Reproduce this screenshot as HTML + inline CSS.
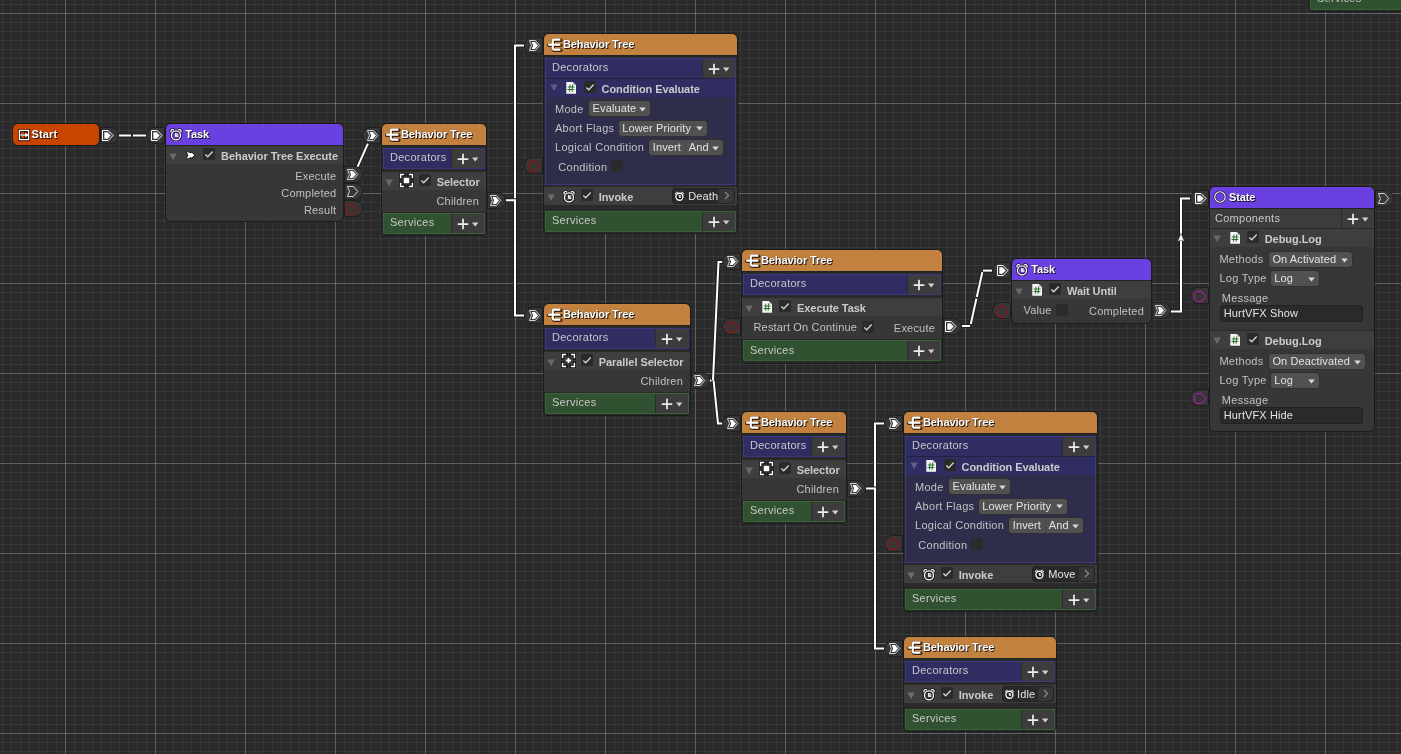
<!DOCTYPE html>
<html lang="en"><head><meta charset="utf-8"><title>Behavior Tree Graph</title>
<style>
html,body{margin:0;padding:0;background:#2a2a2a;}
body{width:1401px;height:754px;overflow:hidden;position:relative;font-family:"Liberation Sans",sans-serif;font-size:11px;color:#c4c4c4;}
#cv{position:absolute;left:0;top:0;width:1401px;height:754px;overflow:hidden;background-color:#2a2a2a;}
#cv{background-image:
 repeating-linear-gradient(90deg,transparent 0,transparent 65px,rgba(255,255,255,.2) 65px,rgba(255,255,255,.2) 66px,transparent 66px,transparent 90px),
 repeating-linear-gradient(180deg,transparent 0,transparent 13px,rgba(255,255,255,.2) 13px,rgba(255,255,255,.2) 14px,transparent 14px,transparent 90px),
 repeating-linear-gradient(90deg,transparent 0,transparent 2px,rgba(255,255,255,.055) 2px,rgba(255,255,255,.055) 3px,transparent 3px,transparent 9px),
 repeating-linear-gradient(180deg,transparent 0,transparent 4px,rgba(255,255,255,.055) 4px,rgba(255,255,255,.055) 5px,transparent 5px,transparent 9px);
 background-size:auto;background-repeat:repeat;}
#cv div,#cv svg.ic{position:absolute;box-sizing:content-box;}
.node{border:1px solid #1c1c1c;border-radius:6px;background:rgba(42,42,42,.97);overflow:hidden;}
.body{background:rgba(57,57,57,.9);}
.start{border-radius:6px;}
.hdr{border-bottom:1px solid #232323;}
.t{white-space:nowrap;line-height:18px;height:18px;}
.ht{letter-spacing:-.12px;font-weight:bold;color:#fff;line-height:21px;height:21px;font-size:11px;text-shadow:1px 1px 0 rgba(0,0,0,.8),0 0 1px rgba(0,0,0,.6);}
.b{font-weight:bold;color:#cbcbcb;}
.rt{line-height:20.5px;letter-spacing:-.05px;}
.rt2{line-height:20px;letter-spacing:-.08px;}
.row{background:rgba(64,64,64,.94);}
.drow{background:#2f2d62;border-top:1px solid #232142;}
.bar{box-sizing:content-box;}
.bl{line-height:16.5px;height:20px;color:#c8c8c8;letter-spacing:.28px;}
.plus{background:#3c3c3c;border-left:1px solid #2c2c2c;}
.pl{line-height:18px;color:#c0c0c0;letter-spacing:.2px;}
.fl{line-height:18px;color:#c2c2c2;letter-spacing:.28px;}
.dd{background:#515151;border-radius:3px;box-shadow:0 0 0 1px #303030;}
.dt{line-height:14.6px;height:15px;color:#e4e4e4;letter-spacing:.12px;}
.tf{background:#2a2a2a;border-radius:3px;box-shadow:0 0 0 1px #212121;}
.objf{background:#2a2a2a;border-radius:3px;box-shadow:0 0 0 1px #232323;overflow:hidden;}
.objb{background:#373737;}
.decp{background:rgba(47,46,78,.92);border:1px solid #3b397f;}
.cmpbar{background:#3c3c3c;border-bottom:1px solid #2a2a2a;}
.tab{background:#363636;border:1px solid #1f1f1f;}
.tr{border-radius:0 8.5px 8.5px 0;}
.tl{border-radius:8.5px 0 0 8.5px;}
.eo{fill:none;stroke:#1e1e1e;stroke-width:4;stroke-linecap:butt;stroke-linejoin:miter;}
.ei{fill:none;stroke:#fff;stroke-width:2;stroke-linecap:butt;stroke-linejoin:miter;}
#ed{position:absolute;left:0;top:0;}
#ly{left:0;top:0;width:1401px;height:754px;will-change:transform;}
</style></head>
<body>
<div id="cv">
<svg id="ed" width="1401" height="754" viewBox="0 0 1401 754"><path d="M119 135.5H131" class="eo"/><path d="M119 135.5H131" class="ei"/><path d="M133 135.5H146" class="eo"/><path d="M133 135.5H146" class="ei"/><path d="M357.2 167.6L368 143.4" class="eo"/><path d="M357.2 167.6L368 143.4" class="ei"/><path d="M506 200.3H515V45.5H524" class="eo"/><path d="M506 200.3H515V45.5H524" class="ei"/><path d="M506 200.3H515V315.5H524" class="eo"/><path d="M506 200.3H515V315.5H524" class="ei"/><path d="M708 380.5H714" class="eo"/><path d="M708 380.5H714" class="ei"/><path d="M713 380.5L718.5 262H723" class="eo"/><path d="M713 380.5L718.5 262H723" class="ei"/><path d="M713.6 380.5L718 423.5H723" class="eo"/><path d="M713.6 380.5L718 423.5H723" class="ei"/><path d="M962 326H970" class="eo"/><path d="M962 326H970" class="ei"/><path d="M970.8 324L976.4 298.6" class="eo"/><path d="M970.8 324L976.4 298.6" class="ei"/><path d="M976.8 297L982.4 272" class="eo"/><path d="M976.8 297L982.4 272" class="ei"/><path d="M983 270.6H992" class="eo"/><path d="M983 270.6H992" class="ei"/><path d="M1171 311.5H1181V198.5H1190" class="eo"/><path d="M1171 311.5H1181V198.5H1190" class="ei"/><path d="M866 488.4H875V423.5H884" class="eo"/><path d="M866 488.4H875V423.5H884" class="ei"/><path d="M866 488.4H875V648.5H884" class="eo"/><path d="M866 488.4H875V648.5H884" class="ei"/><path d="M1181 233.2L1184.4 241.6L1181 240.2L1177.6 241.6Z" fill="#fff" stroke="#222" stroke-width=".5"/></svg>
<div id="ly">
<div class="node start" style="left:12px;top:123px;width:86px;height:21px;background:#c84400;"><svg class="ic" style="left:4.5px;top:4.6px" width="13" height="13" viewBox="0 0 13 13" ><rect x="1.4" y="1.4" width="9.2" height="9.2" fill="none" stroke="#1a0a00" stroke-width="3" opacity=".85"/><path d="M2.6 6H8M7.2 3.2L11 6L7.2 8.8Z" stroke="#1a0a00" stroke-width="2.2" fill="#1a0a00" opacity=".8"/><rect x="1.4" y="1.4" width="9.2" height="9.2" fill="none" stroke="#fff" stroke-width="1.25"/><path d="M2.4 6H8" stroke="#e4eaee" stroke-width="1.3"/><path d="M7.2 3.4L10.8 6L7.2 8.6Z" fill="#fff"/></svg><div class="t ht" style="left:18.6px;top:0px;letter-spacing:0.1px;">Start</div></div>
<div class="tab tr" style="left:99.5px;top:127.3px;width:17px;height:14.5px;"><svg class="ic" style="left:0.8px;top:1px" width="13" height="13" viewBox="0 0 13 13" ><path d="M1.5 1.5H7.2L12 6.5L7.2 11.5H1.5Z" fill="none" stroke="#fff" stroke-width="1"/><path d="M3.3 3.3H6.6L9.7 6.5L6.6 9.7H3.3Z" fill="#fff"/></svg></div>
<div class="node " style="left:165px;top:123px;width:177px;height:97px;"><div class="hdr" style="left:0px;top:0px;width:177px;height:21px;background:#6a40e0;"><svg class="ic" style="left:3.3px;top:3.8px" width="14.0" height="13.0" viewBox="0 0 14 13"><g fill="none" stroke="#101010" stroke-width="3" opacity=".85"><circle cx="7" cy="7.4" r="4.5"/><path d="M2.3 4.4Q1.2 2.2 3.3 1.7Q4.4 1.5 5 2.2M11.7 4.4Q12.8 2.2 10.7 1.7Q9.6 1.5 9 2.2"/></g><circle cx="7" cy="7.4" r="4.5" fill="none" stroke="#fff" stroke-width="1.35"/><path d="M2.3 4.4Q1.2 2.2 3.3 1.7Q4.4 1.5 5 2.2M11.7 4.4Q12.8 2.2 10.7 1.7Q9.6 1.5 9 2.2" fill="none" stroke="#fff" stroke-width="1.25"/><path d="M6.4 5.2H9.2V8.4H6.4Z" fill="#d8d8d8" opacity=".75"/><path d="M6.7 5V8.2H9.4" fill="none" stroke="#fff" stroke-width="1.1"/></svg><div class="t ht" style="left:19.2px;top:0px;">Task</div></div><div class="row" style="left:0px;top:22px;width:177px;height:18px;"><svg class="ic" style="left:2.8px;top:6.5px" width="9" height="8" viewBox="0 0 9 8" ><path d="M.4 .5H7.8L4.1 7.1Z" fill="rgba(255,255,255,.23)"/></svg><svg class="ic" style="left:19px;top:4px" width="12" height="11" viewBox="0 0 12 11" ><path d="M1.4 2.4Q2.6 1.4 3.8 2L6 2.8L6.8 2.2L9.9 5.2L6.8 8.2L6 7.6L3.8 8.6Q2.6 9.2 1.4 8.2L2.8 5.3Z" fill="#fff" stroke="#111" stroke-width="1"/></svg><svg class="ic" style="left:37px;top:2px" width="12" height="12" viewBox="0 0 12 12" ><rect x="0" y="0" width="12" height="12" rx="1.5" fill="#2a2a2a"/><path d="M2.3 6.5L4.7 8.8L9.7 3.5" fill="none" stroke="#d2d2d2" stroke-width="1.35"/></svg><div class="t b rt" style="left:55px;top:0px;">Behavior Tree Execute</div></div><div class="body" style="left:0px;top:40px;width:177px;height:57px;"></div><div class="t pl" style="left:0px;top:43px;width:170.3px;text-align:right;">Execute</div><div class="t pl" style="left:0px;top:60px;width:170.3px;text-align:right;">Completed</div><div class="t pl" style="left:0px;top:77px;width:170.3px;text-align:right;">Result</div></div>
<div class="tab tl" style="left:146.1px;top:127.3px;width:17px;height:14.5px;"><svg class="ic" style="left:2.8px;top:1px" width="13" height="13" viewBox="0 0 13 13" ><path d="M1.5 1.5H7.2L12 6.5L7.2 11.5H1.5Z" fill="none" stroke="#fff" stroke-width="1"/><path d="M3.3 3.3H6.6L9.7 6.5L6.6 9.7H3.3Z" fill="#fff"/></svg></div>
<div class="tab tr" style="left:343.5px;top:166.3px;width:17px;height:14.5px;"><svg class="ic" style="left:1.2px;top:0.8px" width="14" height="13" viewBox="0 0 14 13" ><path d="M1.5 1.5H7.4L11.7 6.5L7.4 11.5H1.5L3.4 6.5Z" fill="none" stroke="#dcdcdc" stroke-width=".95"/><path d="M3.7 3H6.9L10 6.5L6.9 10H3.7L5.1 6.5Z" fill="#fff"/></svg></div>
<div class="tab tr" style="left:343.5px;top:183.3px;width:17px;height:14.5px;"><svg class="ic" style="left:1.2px;top:0.8px" width="14" height="13" viewBox="0 0 14 13" ><path d="M1.5 1.5H7.4L11.7 6.5L7.4 11.5H1.5L3.4 6.5Z" fill="none" stroke="#dcdcdc" stroke-width=".95"/></svg></div>
<div class="tab tr" style="left:343.5px;top:200.3px;width:17px;height:14.5px;"><svg class="ic" style="left:0.4px;top:1.5px" width="14" height="13" viewBox="0 0 14 13" ><path d="M1.3 4.2L3.9 1.4H8.6L12.9 6.5L8.6 11.6H3.9L1.3 8.8Z" fill="none" stroke="#b40202" stroke-width=".95"/></svg></div>
<div class="node " style="left:381px;top:123px;width:104px;height:111px;"><div class="hdr" style="left:0px;top:0px;width:104px;height:21px;background:#c2813f;"><svg class="ic" style="left:3px;top:4px" width="16" height="14" viewBox="0 0 16 14" ><path d="M1.2 6.6H5.8M13.4 1.6H6.9Q5.8 1.6 5.8 2.7V10.5Q5.8 11.6 6.9 11.6H13.4M5.8 6.6H13.4" fill="none" stroke="#1a0d00" stroke-width="3.4" stroke-linecap="round" opacity=".8" transform="translate(.5 .6)"/><path d="M1.2 6.6H5.8M13.4 1.6H6.9Q5.8 1.6 5.8 2.7V10.5Q5.8 11.6 6.9 11.6H13.4M5.8 6.6H13.4" fill="none" stroke="#fff" stroke-width="2.05" stroke-linecap="butt"/></svg><div class="t ht" style="left:19px;top:0px;">Behavior Tree</div></div><div class="bar" style="left:1px;top:24px;width:100px;height:19px;background:#2f2d62;border:1px solid #3b397f;"><div class="t bl" style="left:6px;top:0px;">Decorators</div><div class="plus" style="left:67px;top:0px;width:32px;height:19px;"><svg class="ic" style="left:4.5px;top:3.5px" width="22" height="12" viewBox="0 0 22 12" ><path d="M6 .7V11.3M.7 6H11.3" stroke="#ececec" stroke-width="1.75"/><path d="M15 4.4H21.4L18.2 8.4Z" fill="#d0d0d0"/></svg></div></div><div class="row" style="left:0px;top:48px;width:104px;height:18px;"><svg class="ic" style="left:2.8px;top:6.5px" width="9" height="8" viewBox="0 0 9 8" ><path d="M.4 .5H7.8L4.1 7.1Z" fill="rgba(255,255,255,.23)"/></svg><svg class="ic" style="left:17.3px;top:1px" width="15" height="15" viewBox="0 0 15 15" ><path d="M1.6 5.2V1.6H5.2M9.8 1.6H13.4V5.2M13.4 9.8V13.4H9.8M5.2 13.4H1.6V9.8" fill="none" stroke="#0c0c0c" stroke-width="3.2" stroke-linecap="square" opacity=".92"/><rect x="3.8" y="3.8" width="7.4" height="7.4" fill="#0c0c0c" opacity=".92"/><path d="M1.6 5.2V1.6H5.2M9.8 1.6H13.4V5.2M13.4 9.8V13.4H9.8M5.2 13.4H1.6V9.8" fill="none" stroke="#fff" stroke-width="1.5"/><rect x="4.7" y="4.7" width="5.6" height="5.6" fill="#fff"/></svg><svg class="ic" style="left:37px;top:2.3px" width="12" height="12" viewBox="0 0 12 12" ><rect x="0" y="0" width="12" height="12" rx="1.5" fill="#2a2a2a"/><path d="M2.3 6.5L4.7 8.8L9.7 3.5" fill="none" stroke="#d2d2d2" stroke-width="1.35"/></svg><div class="t b rt" style="left:54.7px;top:0px;">Selector</div></div><div class="body" style="left:0px;top:66px;width:104px;height:21.5px;"></div><div class="t pl" style="left:0px;top:68px;width:97px;text-align:right;">Children</div><div class="bar" style="left:1px;top:89px;width:100px;height:19px;background:#305230;border:1px solid #386238;"><div class="t bl" style="left:6px;top:0.1px;">Services</div><div class="plus" style="left:67px;top:0px;width:32px;height:19px;"><svg class="ic" style="left:4.5px;top:3.5px" width="22" height="12" viewBox="0 0 22 12" ><path d="M6 .7V11.3M.7 6H11.3" stroke="#ececec" stroke-width="1.75"/><path d="M15 4.4H21.4L18.2 8.4Z" fill="#d0d0d0"/></svg></div></div></div><div class="tab tl" style="left:362.1px;top:127.3px;width:17px;height:14.5px;"><svg class="ic" style="left:3.1px;top:0.6px" width="14" height="13" viewBox="0 0 14 13" ><path d="M1.5 1.5H7.4L11.7 6.5L7.4 11.5H1.5L3.4 6.5Z" fill="none" stroke="#dcdcdc" stroke-width=".95"/><path d="M3.7 3H6.9L10 6.5L6.9 10H3.7L5.1 6.5Z" fill="#fff"/></svg></div><div class="tab tr" style="left:486.5px;top:192.10000000000002px;width:17px;height:14.5px;"><svg class="ic" style="left:1.2px;top:0.8px" width="14" height="13" viewBox="0 0 14 13" ><path d="M1.5 1.5H7.4L11.7 6.5L7.4 11.5H1.5L3.4 6.5Z" fill="none" stroke="#dcdcdc" stroke-width=".95"/><path d="M3.7 3H6.9L10 6.5L6.9 10H3.7L5.1 6.5Z" fill="#fff"/></svg></div>
<div class="node " style="left:543px;top:303px;width:146px;height:111px;"><div class="hdr" style="left:0px;top:0px;width:146px;height:21px;background:#c2813f;"><svg class="ic" style="left:3px;top:4px" width="16" height="14" viewBox="0 0 16 14" ><path d="M1.2 6.6H5.8M13.4 1.6H6.9Q5.8 1.6 5.8 2.7V10.5Q5.8 11.6 6.9 11.6H13.4M5.8 6.6H13.4" fill="none" stroke="#1a0d00" stroke-width="3.4" stroke-linecap="round" opacity=".8" transform="translate(.5 .6)"/><path d="M1.2 6.6H5.8M13.4 1.6H6.9Q5.8 1.6 5.8 2.7V10.5Q5.8 11.6 6.9 11.6H13.4M5.8 6.6H13.4" fill="none" stroke="#fff" stroke-width="2.05" stroke-linecap="butt"/></svg><div class="t ht" style="left:19px;top:0px;">Behavior Tree</div></div><div class="bar" style="left:1px;top:24px;width:142px;height:19px;background:#2f2d62;border:1px solid #3b397f;"><div class="t bl" style="left:6px;top:0px;">Decorators</div><div class="plus" style="left:109px;top:0px;width:32px;height:19px;"><svg class="ic" style="left:4.5px;top:3.5px" width="22" height="12" viewBox="0 0 22 12" ><path d="M6 .7V11.3M.7 6H11.3" stroke="#ececec" stroke-width="1.75"/><path d="M15 4.4H21.4L18.2 8.4Z" fill="#d0d0d0"/></svg></div></div><div class="row" style="left:0px;top:48px;width:146px;height:18px;"><svg class="ic" style="left:2.8px;top:6.5px" width="9" height="8" viewBox="0 0 9 8" ><path d="M.4 .5H7.8L4.1 7.1Z" fill="rgba(255,255,255,.23)"/></svg><svg class="ic" style="left:17.3px;top:1px" width="15" height="15" viewBox="0 0 15 15" ><path d="M1.6 5.2V1.6H5.2M9.8 1.6H13.4V5.2M13.4 9.8V13.4H9.8M5.2 13.4H1.6V9.8" fill="none" stroke="#0c0c0c" stroke-width="3.2" stroke-linecap="square" opacity=".92"/><path d="M7.5 4.8V10.2M4.8 7.5H10.2" stroke="#0c0c0c" stroke-width="3.6" opacity=".92"/><path d="M1.6 5.2V1.6H5.2M9.8 1.6H13.4V5.2M13.4 9.8V13.4H9.8M5.2 13.4H1.6V9.8" fill="none" stroke="#fff" stroke-width="1.5"/><path d="M7.5 4.9V10.1M4.9 7.5H10.1" stroke="#fff" stroke-width="1.9"/></svg><svg class="ic" style="left:37px;top:2.3px" width="12" height="12" viewBox="0 0 12 12" ><rect x="0" y="0" width="12" height="12" rx="1.5" fill="#2a2a2a"/><path d="M2.3 6.5L4.7 8.8L9.7 3.5" fill="none" stroke="#d2d2d2" stroke-width="1.35"/></svg><div class="t b rt" style="left:54.7px;top:0px;">Parallel Selector</div></div><div class="body" style="left:0px;top:66px;width:146px;height:21.5px;"></div><div class="t pl" style="left:0px;top:68px;width:139px;text-align:right;">Children</div><div class="bar" style="left:1px;top:89px;width:142px;height:19px;background:#305230;border:1px solid #386238;"><div class="t bl" style="left:6px;top:0.1px;">Services</div><div class="plus" style="left:109px;top:0px;width:32px;height:19px;"><svg class="ic" style="left:4.5px;top:3.5px" width="22" height="12" viewBox="0 0 22 12" ><path d="M6 .7V11.3M.7 6H11.3" stroke="#ececec" stroke-width="1.75"/><path d="M15 4.4H21.4L18.2 8.4Z" fill="#d0d0d0"/></svg></div></div></div><div class="tab tl" style="left:524.1px;top:307.3px;width:17px;height:14.5px;"><svg class="ic" style="left:3.1px;top:0.6px" width="14" height="13" viewBox="0 0 14 13" ><path d="M1.5 1.5H7.4L11.7 6.5L7.4 11.5H1.5L3.4 6.5Z" fill="none" stroke="#dcdcdc" stroke-width=".95"/><path d="M3.7 3H6.9L10 6.5L6.9 10H3.7L5.1 6.5Z" fill="#fff"/></svg></div><div class="tab tr" style="left:690.5px;top:372.1px;width:17px;height:14.5px;"><svg class="ic" style="left:1.2px;top:0.8px" width="14" height="13" viewBox="0 0 14 13" ><path d="M1.5 1.5H7.4L11.7 6.5L7.4 11.5H1.5L3.4 6.5Z" fill="none" stroke="#dcdcdc" stroke-width=".95"/><path d="M3.7 3H6.9L10 6.5L6.9 10H3.7L5.1 6.5Z" fill="#fff"/></svg></div>
<div class="node " style="left:741px;top:411px;width:104px;height:111px;"><div class="hdr" style="left:0px;top:0px;width:104px;height:21px;background:#c2813f;"><svg class="ic" style="left:3px;top:4px" width="16" height="14" viewBox="0 0 16 14" ><path d="M1.2 6.6H5.8M13.4 1.6H6.9Q5.8 1.6 5.8 2.7V10.5Q5.8 11.6 6.9 11.6H13.4M5.8 6.6H13.4" fill="none" stroke="#1a0d00" stroke-width="3.4" stroke-linecap="round" opacity=".8" transform="translate(.5 .6)"/><path d="M1.2 6.6H5.8M13.4 1.6H6.9Q5.8 1.6 5.8 2.7V10.5Q5.8 11.6 6.9 11.6H13.4M5.8 6.6H13.4" fill="none" stroke="#fff" stroke-width="2.05" stroke-linecap="butt"/></svg><div class="t ht" style="left:19px;top:0px;">Behavior Tree</div></div><div class="bar" style="left:1px;top:24px;width:100px;height:19px;background:#2f2d62;border:1px solid #3b397f;"><div class="t bl" style="left:6px;top:0px;">Decorators</div><div class="plus" style="left:67px;top:0px;width:32px;height:19px;"><svg class="ic" style="left:4.5px;top:3.5px" width="22" height="12" viewBox="0 0 22 12" ><path d="M6 .7V11.3M.7 6H11.3" stroke="#ececec" stroke-width="1.75"/><path d="M15 4.4H21.4L18.2 8.4Z" fill="#d0d0d0"/></svg></div></div><div class="row" style="left:0px;top:48px;width:104px;height:18px;"><svg class="ic" style="left:2.8px;top:6.5px" width="9" height="8" viewBox="0 0 9 8" ><path d="M.4 .5H7.8L4.1 7.1Z" fill="rgba(255,255,255,.23)"/></svg><svg class="ic" style="left:17.3px;top:1px" width="15" height="15" viewBox="0 0 15 15" ><path d="M1.6 5.2V1.6H5.2M9.8 1.6H13.4V5.2M13.4 9.8V13.4H9.8M5.2 13.4H1.6V9.8" fill="none" stroke="#0c0c0c" stroke-width="3.2" stroke-linecap="square" opacity=".92"/><rect x="3.8" y="3.8" width="7.4" height="7.4" fill="#0c0c0c" opacity=".92"/><path d="M1.6 5.2V1.6H5.2M9.8 1.6H13.4V5.2M13.4 9.8V13.4H9.8M5.2 13.4H1.6V9.8" fill="none" stroke="#fff" stroke-width="1.5"/><rect x="4.7" y="4.7" width="5.6" height="5.6" fill="#fff"/></svg><svg class="ic" style="left:37px;top:2.3px" width="12" height="12" viewBox="0 0 12 12" ><rect x="0" y="0" width="12" height="12" rx="1.5" fill="#2a2a2a"/><path d="M2.3 6.5L4.7 8.8L9.7 3.5" fill="none" stroke="#d2d2d2" stroke-width="1.35"/></svg><div class="t b rt" style="left:54.7px;top:0px;">Selector</div></div><div class="body" style="left:0px;top:66px;width:104px;height:21.5px;"></div><div class="t pl" style="left:0px;top:68px;width:97px;text-align:right;">Children</div><div class="bar" style="left:1px;top:89px;width:100px;height:19px;background:#305230;border:1px solid #386238;"><div class="t bl" style="left:6px;top:0.1px;">Services</div><div class="plus" style="left:67px;top:0px;width:32px;height:19px;"><svg class="ic" style="left:4.5px;top:3.5px" width="22" height="12" viewBox="0 0 22 12" ><path d="M6 .7V11.3M.7 6H11.3" stroke="#ececec" stroke-width="1.75"/><path d="M15 4.4H21.4L18.2 8.4Z" fill="#d0d0d0"/></svg></div></div></div><div class="tab tl" style="left:722.1px;top:415.3px;width:17px;height:14.5px;"><svg class="ic" style="left:3.1px;top:0.6px" width="14" height="13" viewBox="0 0 14 13" ><path d="M1.5 1.5H7.4L11.7 6.5L7.4 11.5H1.5L3.4 6.5Z" fill="none" stroke="#dcdcdc" stroke-width=".95"/><path d="M3.7 3H6.9L10 6.5L6.9 10H3.7L5.1 6.5Z" fill="#fff"/></svg></div><div class="tab tr" style="left:846.5px;top:480.1px;width:17px;height:14.5px;"><svg class="ic" style="left:1.2px;top:0.8px" width="14" height="13" viewBox="0 0 14 13" ><path d="M1.5 1.5H7.4L11.7 6.5L7.4 11.5H1.5L3.4 6.5Z" fill="none" stroke="#dcdcdc" stroke-width=".95"/><path d="M3.7 3H6.9L10 6.5L6.9 10H3.7L5.1 6.5Z" fill="#fff"/></svg></div>
<div class="node " style="left:543px;top:33px;width:193px;height:199px;"><div class="hdr" style="left:0px;top:0px;width:193px;height:21px;background:#c2813f;"><svg class="ic" style="left:3px;top:4px" width="16" height="14" viewBox="0 0 16 14" ><path d="M1.2 6.6H5.8M13.4 1.6H6.9Q5.8 1.6 5.8 2.7V10.5Q5.8 11.6 6.9 11.6H13.4M5.8 6.6H13.4" fill="none" stroke="#1a0d00" stroke-width="3.4" stroke-linecap="round" opacity=".8" transform="translate(.5 .6)"/><path d="M1.2 6.6H5.8M13.4 1.6H6.9Q5.8 1.6 5.8 2.7V10.5Q5.8 11.6 6.9 11.6H13.4M5.8 6.6H13.4" fill="none" stroke="#fff" stroke-width="2.05" stroke-linecap="butt"/></svg><div class="t ht" style="left:19px;top:0px;">Behavior Tree</div></div><div class="decp" style="left:1px;top:24px;width:189px;height:125px;"><div class="" style="left:0px;top:0px;width:189px;height:19px;background:#2f2d62;"></div><div class="t bl" style="left:6px;top:0px;">Decorators</div><div class="plus" style="left:156px;top:0px;width:32px;height:19px;"><svg class="ic" style="left:4.5px;top:4px" width="22" height="12" viewBox="0 0 22 12" ><path d="M6 .7V11.3M.7 6H11.3" stroke="#ececec" stroke-width="1.75"/><path d="M15 4.4H21.4L18.2 8.4Z" fill="#d0d0d0"/></svg></div><div class="drow" style="left:0px;top:19px;width:189px;height:17.5px;"><svg class="ic" style="left:4px;top:4.5px" width="9" height="8" viewBox="0 0 9 8" ><path d="M.4 .5H7.8L4.1 7.1Z" fill="rgba(255,255,255,.23)"/></svg><svg class="ic" style="left:20.3px;top:1.8px" width="11" height="13" viewBox="0 0 11 13" ><path d="M.3 .9H6.7L10 4.2V12.7H.3Z" fill="#f6f6f6"/><path d="M6.7 .9V4.2H10Z" fill="#cdcdcd"/><path d="M4 3.6L3.5 10.8M6.6 3.6L6.1 10.8M1.8 6H8.6M1.5 8.5H8.3" stroke="#1f6b24" stroke-width=".95" fill="none"/></svg><svg class="ic" style="left:37.5px;top:2px" width="12" height="12" viewBox="0 0 12 12" ><rect x="0" y="0" width="12" height="12" rx="1.5" fill="#2a2a2a"/><path d="M2.3 6.5L4.7 8.8L9.7 3.5" fill="none" stroke="#d2d2d2" stroke-width="1.35"/></svg><div class="t b rt2" style="left:55.6px;top:0px;">Condition Evaluate</div></div><div class="t fl" style="left:9px;top:41px;">Mode</div><div class="dd" style="left:43.4px;top:42.2px;width:60.7px;height:15px;"><div class="t dt" style="left:3.2px;top:0px;">Evaluate</div><svg class="ic" style="left:49.7px;top:5.5px" width="7" height="5" viewBox="0 0 7 5" ><path d="M.2 .4H6.8L3.5 4.4Z" fill="#d8d8d8"/></svg></div><div class="t fl" style="left:9px;top:60px;">Abort Flags</div><div class="dd" style="left:73px;top:61.7px;width:87.6px;height:15px;"><div class="t dt" style="left:3.2px;top:0px;">Lower Priority</div><svg class="ic" style="left:76.6px;top:5.5px" width="7" height="5" viewBox="0 0 7 5" ><path d="M.2 .4H6.8L3.5 4.4Z" fill="#d8d8d8"/></svg></div><div class="t fl" style="left:9px;top:78.8px;">Logical Condition</div><div class="dd" style="left:102.8px;top:81px;width:74px;height:15px;"><div class="t dt" style="left:4px;top:0px;">Invert</div><div class="" style="left:36.5px;top:0px;width:1px;height:15px;background:#454545;position:absolute;"></div><div class="t dt" style="left:40px;top:0px;">And</div><svg class="ic" style="left:63px;top:5.5px" width="7" height="5" viewBox="0 0 7 5" ><path d="M.2 .4H6.8L3.5 4.4Z" fill="#d8d8d8"/></svg></div><div class="t fl" style="left:12.3px;top:98.5px;">Condition</div><svg class="ic" style="left:65.3px;top:101.2px" width="12" height="12" viewBox="0 0 12 12" ><rect x="0" y="0" width="12" height="12" rx="1.5" fill="#2b2b2b"/></svg></div><div class="row" style="left:0px;top:153px;width:193px;height:18px;"><svg class="ic" style="left:2.8px;top:6.5px" width="9" height="8" viewBox="0 0 9 8" ><path d="M.4 .5H7.8L4.1 7.1Z" fill="rgba(255,255,255,.23)"/></svg><svg class="ic" style="left:17.5px;top:2.5px" width="14.0" height="13.0" viewBox="0 0 14 13"><g fill="none" stroke="#101010" stroke-width="3" opacity=".85"><circle cx="7" cy="7.4" r="4.5"/><path d="M2.3 4.4Q1.2 2.2 3.3 1.7Q4.4 1.5 5 2.2M11.7 4.4Q12.8 2.2 10.7 1.7Q9.6 1.5 9 2.2"/></g><circle cx="7" cy="7.4" r="4.5" fill="none" stroke="#fff" stroke-width="1.35"/><path d="M2.3 4.4Q1.2 2.2 3.3 1.7Q4.4 1.5 5 2.2M11.7 4.4Q12.8 2.2 10.7 1.7Q9.6 1.5 9 2.2" fill="none" stroke="#fff" stroke-width="1.25"/><path d="M6.4 5.2H9.2V8.4H6.4Z" fill="#d8d8d8" opacity=".75"/><path d="M6.7 5V8.2H9.4" fill="none" stroke="#fff" stroke-width="1.1"/></svg><svg class="ic" style="left:37px;top:2px" width="12" height="12" viewBox="0 0 12 12" ><rect x="0" y="0" width="12" height="12" rx="1.5" fill="#2a2a2a"/><path d="M2.3 6.5L4.7 8.8L9.7 3.5" fill="none" stroke="#d2d2d2" stroke-width="1.35"/></svg><div class="t b rt" style="left:54.7px;top:0px;">Invoke</div><div class="objf" style="left:129px;top:1.7px;width:61.3px;height:14.2px;"><svg class="ic" style="left:1px;top:2px" width="10.9" height="10.1" viewBox="0 0 14 13"><circle cx="7" cy="7.4" r="4.5" fill="#0e0e0e" stroke="#fff" stroke-width="1.7"/><path d="M2.3 4.4Q1.2 2.2 3.3 1.7Q4.4 1.5 5 2.2M11.7 4.4Q12.8 2.2 10.7 1.7Q9.6 1.5 9 2.2" fill="none" stroke="#fff" stroke-width="1.25"/><path d="M6.4 5.2H9.2V8.4H6.4Z" fill="#d8d8d8" opacity=".75"/><path d="M6.7 5V8.2H9.4" fill="none" stroke="#fff" stroke-width="1.1"/></svg><div class="t dt" style="left:15.2px;top:-0.2px;">Death</div><div class="objb" style="left:45.5px;top:0px;width:16px;height:15px;"><svg class="ic" style="left:5.5px;top:2.8px" width="6" height="9" viewBox="0 0 6 9" ><path d="M1 1L4.6 4.5L1 8" fill="none" stroke="#8a8a8a" stroke-width="1.2"/></svg></div></div></div><div class="bar" style="left:1px;top:177px;width:189px;height:19px;background:#305230;border:1px solid #386238;"><div class="t bl" style="left:6px;top:0.1px;">Services</div><div class="plus" style="left:156px;top:0px;width:32px;height:19px;"><svg class="ic" style="left:4.5px;top:3.5px" width="22" height="12" viewBox="0 0 22 12" ><path d="M6 .7V11.3M.7 6H11.3" stroke="#ececec" stroke-width="1.75"/><path d="M15 4.4H21.4L18.2 8.4Z" fill="#d0d0d0"/></svg></div></div></div><div class="tab tl" style="left:524.1px;top:37.3px;width:17px;height:14.5px;"><svg class="ic" style="left:3.1px;top:0.6px" width="14" height="13" viewBox="0 0 14 13" ><path d="M1.5 1.5H7.4L11.7 6.5L7.4 11.5H1.5L3.4 6.5Z" fill="none" stroke="#dcdcdc" stroke-width=".95"/><path d="M3.7 3H6.9L10 6.5L6.9 10H3.7L5.1 6.5Z" fill="#fff"/></svg></div><div class="tab tl" style="left:524.1px;top:157.3px;width:17px;height:14.5px;"><svg class="ic" style="left:1.9px;top:1.5px" width="14" height="13" viewBox="0 0 14 13" ><path d="M1.3 4.2L3.9 1.4H8.6L12.9 6.5L8.6 11.6H3.9L1.3 8.8Z" fill="none" stroke="#b40202" stroke-width=".95"/></svg></div>
<div class="node " style="left:903px;top:411px;width:193px;height:199px;"><div class="hdr" style="left:0px;top:0px;width:193px;height:21px;background:#c2813f;"><svg class="ic" style="left:3px;top:4px" width="16" height="14" viewBox="0 0 16 14" ><path d="M1.2 6.6H5.8M13.4 1.6H6.9Q5.8 1.6 5.8 2.7V10.5Q5.8 11.6 6.9 11.6H13.4M5.8 6.6H13.4" fill="none" stroke="#1a0d00" stroke-width="3.4" stroke-linecap="round" opacity=".8" transform="translate(.5 .6)"/><path d="M1.2 6.6H5.8M13.4 1.6H6.9Q5.8 1.6 5.8 2.7V10.5Q5.8 11.6 6.9 11.6H13.4M5.8 6.6H13.4" fill="none" stroke="#fff" stroke-width="2.05" stroke-linecap="butt"/></svg><div class="t ht" style="left:19px;top:0px;">Behavior Tree</div></div><div class="decp" style="left:1px;top:24px;width:189px;height:125px;"><div class="" style="left:0px;top:0px;width:189px;height:19px;background:#2f2d62;"></div><div class="t bl" style="left:6px;top:0px;">Decorators</div><div class="plus" style="left:156px;top:0px;width:32px;height:19px;"><svg class="ic" style="left:4.5px;top:4px" width="22" height="12" viewBox="0 0 22 12" ><path d="M6 .7V11.3M.7 6H11.3" stroke="#ececec" stroke-width="1.75"/><path d="M15 4.4H21.4L18.2 8.4Z" fill="#d0d0d0"/></svg></div><div class="drow" style="left:0px;top:19px;width:189px;height:17.5px;"><svg class="ic" style="left:4px;top:4.5px" width="9" height="8" viewBox="0 0 9 8" ><path d="M.4 .5H7.8L4.1 7.1Z" fill="rgba(255,255,255,.23)"/></svg><svg class="ic" style="left:20.3px;top:1.8px" width="11" height="13" viewBox="0 0 11 13" ><path d="M.3 .9H6.7L10 4.2V12.7H.3Z" fill="#f6f6f6"/><path d="M6.7 .9V4.2H10Z" fill="#cdcdcd"/><path d="M4 3.6L3.5 10.8M6.6 3.6L6.1 10.8M1.8 6H8.6M1.5 8.5H8.3" stroke="#1f6b24" stroke-width=".95" fill="none"/></svg><svg class="ic" style="left:37.5px;top:2px" width="12" height="12" viewBox="0 0 12 12" ><rect x="0" y="0" width="12" height="12" rx="1.5" fill="#2a2a2a"/><path d="M2.3 6.5L4.7 8.8L9.7 3.5" fill="none" stroke="#d2d2d2" stroke-width="1.35"/></svg><div class="t b rt2" style="left:55.6px;top:0px;">Condition Evaluate</div></div><div class="t fl" style="left:9px;top:41px;">Mode</div><div class="dd" style="left:43.4px;top:42.2px;width:60.7px;height:15px;"><div class="t dt" style="left:3.2px;top:0px;">Evaluate</div><svg class="ic" style="left:49.7px;top:5.5px" width="7" height="5" viewBox="0 0 7 5" ><path d="M.2 .4H6.8L3.5 4.4Z" fill="#d8d8d8"/></svg></div><div class="t fl" style="left:9px;top:60px;">Abort Flags</div><div class="dd" style="left:73px;top:61.7px;width:87.6px;height:15px;"><div class="t dt" style="left:3.2px;top:0px;">Lower Priority</div><svg class="ic" style="left:76.6px;top:5.5px" width="7" height="5" viewBox="0 0 7 5" ><path d="M.2 .4H6.8L3.5 4.4Z" fill="#d8d8d8"/></svg></div><div class="t fl" style="left:9px;top:78.8px;">Logical Condition</div><div class="dd" style="left:102.8px;top:81px;width:74px;height:15px;"><div class="t dt" style="left:4px;top:0px;">Invert</div><div class="" style="left:36.5px;top:0px;width:1px;height:15px;background:#454545;position:absolute;"></div><div class="t dt" style="left:40px;top:0px;">And</div><svg class="ic" style="left:63px;top:5.5px" width="7" height="5" viewBox="0 0 7 5" ><path d="M.2 .4H6.8L3.5 4.4Z" fill="#d8d8d8"/></svg></div><div class="t fl" style="left:12.3px;top:98.5px;">Condition</div><svg class="ic" style="left:65.3px;top:101.2px" width="12" height="12" viewBox="0 0 12 12" ><rect x="0" y="0" width="12" height="12" rx="1.5" fill="#2b2b2b"/></svg></div><div class="row" style="left:0px;top:153px;width:193px;height:18px;"><svg class="ic" style="left:2.8px;top:6.5px" width="9" height="8" viewBox="0 0 9 8" ><path d="M.4 .5H7.8L4.1 7.1Z" fill="rgba(255,255,255,.23)"/></svg><svg class="ic" style="left:17.5px;top:2.5px" width="14.0" height="13.0" viewBox="0 0 14 13"><g fill="none" stroke="#101010" stroke-width="3" opacity=".85"><circle cx="7" cy="7.4" r="4.5"/><path d="M2.3 4.4Q1.2 2.2 3.3 1.7Q4.4 1.5 5 2.2M11.7 4.4Q12.8 2.2 10.7 1.7Q9.6 1.5 9 2.2"/></g><circle cx="7" cy="7.4" r="4.5" fill="none" stroke="#fff" stroke-width="1.35"/><path d="M2.3 4.4Q1.2 2.2 3.3 1.7Q4.4 1.5 5 2.2M11.7 4.4Q12.8 2.2 10.7 1.7Q9.6 1.5 9 2.2" fill="none" stroke="#fff" stroke-width="1.25"/><path d="M6.4 5.2H9.2V8.4H6.4Z" fill="#d8d8d8" opacity=".75"/><path d="M6.7 5V8.2H9.4" fill="none" stroke="#fff" stroke-width="1.1"/></svg><svg class="ic" style="left:37px;top:2px" width="12" height="12" viewBox="0 0 12 12" ><rect x="0" y="0" width="12" height="12" rx="1.5" fill="#2a2a2a"/><path d="M2.3 6.5L4.7 8.8L9.7 3.5" fill="none" stroke="#d2d2d2" stroke-width="1.35"/></svg><div class="t b rt" style="left:54.7px;top:0px;">Invoke</div><div class="objf" style="left:129px;top:1.7px;width:61.3px;height:14.2px;"><svg class="ic" style="left:1px;top:2px" width="10.9" height="10.1" viewBox="0 0 14 13"><circle cx="7" cy="7.4" r="4.5" fill="#0e0e0e" stroke="#fff" stroke-width="1.7"/><path d="M2.3 4.4Q1.2 2.2 3.3 1.7Q4.4 1.5 5 2.2M11.7 4.4Q12.8 2.2 10.7 1.7Q9.6 1.5 9 2.2" fill="none" stroke="#fff" stroke-width="1.25"/><path d="M6.4 5.2H9.2V8.4H6.4Z" fill="#d8d8d8" opacity=".75"/><path d="M6.7 5V8.2H9.4" fill="none" stroke="#fff" stroke-width="1.1"/></svg><div class="t dt" style="left:15.2px;top:-0.2px;">Move</div><div class="objb" style="left:45.5px;top:0px;width:16px;height:15px;"><svg class="ic" style="left:5.5px;top:2.8px" width="6" height="9" viewBox="0 0 6 9" ><path d="M1 1L4.6 4.5L1 8" fill="none" stroke="#8a8a8a" stroke-width="1.2"/></svg></div></div></div><div class="bar" style="left:1px;top:177px;width:189px;height:19px;background:#305230;border:1px solid #386238;"><div class="t bl" style="left:6px;top:0.1px;">Services</div><div class="plus" style="left:156px;top:0px;width:32px;height:19px;"><svg class="ic" style="left:4.5px;top:3.5px" width="22" height="12" viewBox="0 0 22 12" ><path d="M6 .7V11.3M.7 6H11.3" stroke="#ececec" stroke-width="1.75"/><path d="M15 4.4H21.4L18.2 8.4Z" fill="#d0d0d0"/></svg></div></div></div><div class="tab tl" style="left:884.1px;top:415.3px;width:17px;height:14.5px;"><svg class="ic" style="left:3.1px;top:0.6px" width="14" height="13" viewBox="0 0 14 13" ><path d="M1.5 1.5H7.4L11.7 6.5L7.4 11.5H1.5L3.4 6.5Z" fill="none" stroke="#dcdcdc" stroke-width=".95"/><path d="M3.7 3H6.9L10 6.5L6.9 10H3.7L5.1 6.5Z" fill="#fff"/></svg></div><div class="tab tl" style="left:884.1px;top:535.3px;width:17px;height:14.5px;"><svg class="ic" style="left:1.9px;top:1.5px" width="14" height="13" viewBox="0 0 14 13" ><path d="M1.3 4.2L3.9 1.4H8.6L12.9 6.5L8.6 11.6H3.9L1.3 8.8Z" fill="none" stroke="#b40202" stroke-width=".95"/></svg></div>
<div class="node " style="left:741px;top:249px;width:200px;height:113px;"><div class="hdr" style="left:0px;top:0px;width:200px;height:21px;background:#c2813f;"><svg class="ic" style="left:3px;top:4px" width="16" height="14" viewBox="0 0 16 14" ><path d="M1.2 6.6H5.8M13.4 1.6H6.9Q5.8 1.6 5.8 2.7V10.5Q5.8 11.6 6.9 11.6H13.4M5.8 6.6H13.4" fill="none" stroke="#1a0d00" stroke-width="3.4" stroke-linecap="round" opacity=".8" transform="translate(.5 .6)"/><path d="M1.2 6.6H5.8M13.4 1.6H6.9Q5.8 1.6 5.8 2.7V10.5Q5.8 11.6 6.9 11.6H13.4M5.8 6.6H13.4" fill="none" stroke="#fff" stroke-width="2.05" stroke-linecap="butt"/></svg><div class="t ht" style="left:19px;top:0px;">Behavior Tree</div></div><div class="bar" style="left:1px;top:24px;width:196px;height:19px;background:#2f2d62;border:1px solid #3b397f;"><div class="t bl" style="left:6px;top:0px;">Decorators</div><div class="plus" style="left:163px;top:0px;width:32px;height:19px;"><svg class="ic" style="left:4.5px;top:3.5px" width="22" height="12" viewBox="0 0 22 12" ><path d="M6 .7V11.3M.7 6H11.3" stroke="#ececec" stroke-width="1.75"/><path d="M15 4.4H21.4L18.2 8.4Z" fill="#d0d0d0"/></svg></div></div><div class="row" style="left:0px;top:48px;width:200px;height:18px;"><svg class="ic" style="left:2.8px;top:6.5px" width="9" height="8" viewBox="0 0 9 8" ><path d="M.4 .5H7.8L4.1 7.1Z" fill="rgba(255,255,255,.23)"/></svg><svg class="ic" style="left:20px;top:2.2px" width="11" height="13" viewBox="0 0 11 13" ><path d="M.3 .9H6.7L10 4.2V12.7H.3Z" fill="#f6f6f6"/><path d="M6.7 .9V4.2H10Z" fill="#cdcdcd"/><path d="M4 3.6L3.5 10.8M6.6 3.6L6.1 10.8M1.8 6H8.6M1.5 8.5H8.3" stroke="#1f6b24" stroke-width=".95" fill="none"/></svg><svg class="ic" style="left:37px;top:2px" width="12" height="12" viewBox="0 0 12 12" ><rect x="0" y="0" width="12" height="12" rx="1.5" fill="#2a2a2a"/><path d="M2.3 6.5L4.7 8.8L9.7 3.5" fill="none" stroke="#d2d2d2" stroke-width="1.35"/></svg><div class="t b rt" style="left:55px;top:0px;">Execute Task</div></div><div class="body" style="left:0px;top:66px;width:200px;height:23px;"></div><div class="t fl" style="left:11.5px;top:68px;letter-spacing:0.17px;">Restart On Continue</div><svg class="ic" style="left:120px;top:71px" width="12" height="12" viewBox="0 0 12 12" ><rect x="0" y="0" width="12" height="12" rx="1.5" fill="#2b2b2b"/><path d="M2.3 6.5L4.7 8.8L9.7 3.5" fill="none" stroke="#d2d2d2" stroke-width="1.35"/></svg><div class="t pl" style="left:0px;top:69px;width:193px;text-align:right;">Execute</div><div class="bar" style="left:1px;top:90px;width:196px;height:19px;background:#305230;border:1px solid #386238;"><div class="t bl" style="left:6px;top:0.9px;">Services</div><div class="plus" style="left:163px;top:0px;width:32px;height:19px;"><svg class="ic" style="left:4.5px;top:3.5px" width="22" height="12" viewBox="0 0 22 12" ><path d="M6 .7V11.3M.7 6H11.3" stroke="#ececec" stroke-width="1.75"/><path d="M15 4.4H21.4L18.2 8.4Z" fill="#d0d0d0"/></svg></div></div></div>
<div class="tab tl" style="left:722.1px;top:253.3px;width:17px;height:14.5px;"><svg class="ic" style="left:3.1px;top:0.6px" width="14" height="13" viewBox="0 0 14 13" ><path d="M1.5 1.5H7.4L11.7 6.5L7.4 11.5H1.5L3.4 6.5Z" fill="none" stroke="#dcdcdc" stroke-width=".95"/><path d="M3.7 3H6.9L10 6.5L6.9 10H3.7L5.1 6.5Z" fill="#fff"/></svg></div>
<div class="tab tl" style="left:722.1px;top:318.3px;width:17px;height:14.5px;"><svg class="ic" style="left:1.9px;top:1.5px" width="14" height="13" viewBox="0 0 14 13" ><path d="M1.3 4.2L3.9 1.4H8.6L12.9 6.5L8.6 11.6H3.9L1.3 8.8Z" fill="none" stroke="#b40202" stroke-width=".95"/></svg></div>
<div class="tab tr" style="left:942.5px;top:318.3px;width:17px;height:14.5px;"><svg class="ic" style="left:0.8px;top:1px" width="13" height="13" viewBox="0 0 13 13" ><path d="M1.5 1.5H7.2L12 6.5L7.2 11.5H1.5Z" fill="none" stroke="#fff" stroke-width="1"/><path d="M3.3 3.3H6.6L9.7 6.5L6.6 9.7H3.3Z" fill="#fff"/></svg></div>
<div class="node " style="left:1011px;top:258px;width:139px;height:64px;"><div class="hdr" style="left:0px;top:0px;width:139px;height:21px;background:#6a40e0;"><svg class="ic" style="left:3.3px;top:3.8px" width="14.0" height="13.0" viewBox="0 0 14 13"><g fill="none" stroke="#101010" stroke-width="3" opacity=".85"><circle cx="7" cy="7.4" r="4.5"/><path d="M2.3 4.4Q1.2 2.2 3.3 1.7Q4.4 1.5 5 2.2M11.7 4.4Q12.8 2.2 10.7 1.7Q9.6 1.5 9 2.2"/></g><circle cx="7" cy="7.4" r="4.5" fill="none" stroke="#fff" stroke-width="1.35"/><path d="M2.3 4.4Q1.2 2.2 3.3 1.7Q4.4 1.5 5 2.2M11.7 4.4Q12.8 2.2 10.7 1.7Q9.6 1.5 9 2.2" fill="none" stroke="#fff" stroke-width="1.25"/><path d="M6.4 5.2H9.2V8.4H6.4Z" fill="#d8d8d8" opacity=".75"/><path d="M6.7 5V8.2H9.4" fill="none" stroke="#fff" stroke-width="1.1"/></svg><div class="t ht" style="left:19.2px;top:0px;">Task</div></div><div class="row" style="left:0px;top:22px;width:139px;height:18px;"><svg class="ic" style="left:2.8px;top:6.5px" width="9" height="8" viewBox="0 0 9 8" ><path d="M.4 .5H7.8L4.1 7.1Z" fill="rgba(255,255,255,.23)"/></svg><svg class="ic" style="left:20px;top:2.2px" width="11" height="13" viewBox="0 0 11 13" ><path d="M.3 .9H6.7L10 4.2V12.7H.3Z" fill="#f6f6f6"/><path d="M6.7 .9V4.2H10Z" fill="#cdcdcd"/><path d="M4 3.6L3.5 10.8M6.6 3.6L6.1 10.8M1.8 6H8.6M1.5 8.5H8.3" stroke="#1f6b24" stroke-width=".95" fill="none"/></svg><svg class="ic" style="left:37px;top:2px" width="12" height="12" viewBox="0 0 12 12" ><rect x="0" y="0" width="12" height="12" rx="1.5" fill="#2a2a2a"/><path d="M2.3 6.5L4.7 8.8L9.7 3.5" fill="none" stroke="#d2d2d2" stroke-width="1.35"/></svg><div class="t b rt" style="left:55px;top:0px;">Wait Until</div></div><div class="body" style="left:0px;top:40px;width:139px;height:30px;"></div><div class="t fl" style="left:11.6px;top:42.3px;letter-spacing:0.12px;">Value</div><svg class="ic" style="left:44.3px;top:45.4px" width="12" height="12" viewBox="0 0 12 12" ><rect x="0" y="0" width="12" height="12" rx="1.5" fill="#2b2b2b"/></svg><div class="t pl" style="left:0px;top:43px;width:132px;text-align:right;">Completed</div></div>
<div class="tab tl" style="left:992.1px;top:262.3px;width:17px;height:14.5px;"><svg class="ic" style="left:2.8px;top:1px" width="13" height="13" viewBox="0 0 13 13" ><path d="M1.5 1.5H7.2L12 6.5L7.2 11.5H1.5Z" fill="none" stroke="#fff" stroke-width="1"/><path d="M3.3 3.3H6.6L9.7 6.5L6.6 9.7H3.3Z" fill="#fff"/></svg></div>
<div class="tab tl" style="left:992.1px;top:302.3px;width:17px;height:14.5px;"><svg class="ic" style="left:1.9px;top:1.5px" width="14" height="13" viewBox="0 0 14 13" ><path d="M1.3 4.2L3.9 1.4H8.6L12.9 6.5L8.6 11.6H3.9L1.3 8.8Z" fill="none" stroke="#b40202" stroke-width=".95"/></svg></div>
<div class="tab tr" style="left:1151.5px;top:302.3px;width:17px;height:14.5px;"><svg class="ic" style="left:1.2px;top:0.8px" width="14" height="13" viewBox="0 0 14 13" ><path d="M1.5 1.5H7.4L11.7 6.5L7.4 11.5H1.5L3.4 6.5Z" fill="none" stroke="#dcdcdc" stroke-width=".95"/><path d="M3.7 3H6.9L10 6.5L6.9 10H3.7L5.1 6.5Z" fill="#fff"/></svg></div>
<div class="node " style="left:1209px;top:185.6px;width:164px;height:244.4px;"><div class="hdr" style="left:0px;top:0px;width:164px;height:21px;background:#6a40e0;"><svg class="ic" style="left:3px;top:3.5px" width="14" height="14" viewBox="0 0 14 14" ><circle cx="7" cy="7" r="5.2" fill="none" stroke="#111" stroke-width="2.6" opacity=".8"/><circle cx="7" cy="7" r="5.2" fill="none" stroke="#fff" stroke-width="1.1"/></svg><div class="t ht" style="left:19px;top:0px;">State</div></div><div class="cmpbar" style="left:0px;top:22px;width:164px;height:19.4px;"><div class="t bl" style="left:5px;top:1.4px;">Components</div><div class="" style="left:131px;top:0px;width:1px;height:20px;position:absolute;background:#2a2a2a;"></div><svg class="ic" style="left:137px;top:4px" width="22" height="12" viewBox="0 0 22 12" ><path d="M6 .7V11.3M.7 6H11.3" stroke="#ececec" stroke-width="1.75"/><path d="M15 4.4H21.4L18.2 8.4Z" fill="#d0d0d0"/></svg></div><div class="row" style="left:0px;top:42.4px;width:164px;height:18px;"><svg class="ic" style="left:2.8px;top:6.5px" width="9" height="8" viewBox="0 0 9 8" ><path d="M.4 .5H7.8L4.1 7.1Z" fill="rgba(255,255,255,.23)"/></svg><svg class="ic" style="left:20px;top:2.2px" width="11" height="13" viewBox="0 0 11 13" ><path d="M.3 .9H6.7L10 4.2V12.7H.3Z" fill="#f6f6f6"/><path d="M6.7 .9V4.2H10Z" fill="#cdcdcd"/><path d="M4 3.6L3.5 10.8M6.6 3.6L6.1 10.8M1.8 6H8.6M1.5 8.5H8.3" stroke="#1f6b24" stroke-width=".95" fill="none"/></svg><svg class="ic" style="left:37px;top:2px" width="12" height="12" viewBox="0 0 12 12" ><rect x="0" y="0" width="12" height="12" rx="1.5" fill="#2a2a2a"/><path d="M2.3 6.5L4.7 8.8L9.7 3.5" fill="none" stroke="#d2d2d2" stroke-width="1.35"/></svg><div class="t b rt" style="left:54.7px;top:0px;">Debug.Log</div></div><div class="body" style="left:0px;top:60.4px;width:164px;height:83px;"></div><div class="t fl" style="left:9.4px;top:63.4px;">Methods</div><div class="dd" style="left:59.2px;top:65.6px;width:82.6px;height:15px;"><div class="t dt" style="left:3.2px;top:0px;">On Activated</div><svg class="ic" style="left:71.6px;top:5.5px" width="7" height="5" viewBox="0 0 7 5" ><path d="M.2 .4H6.8L3.5 4.4Z" fill="#d8d8d8"/></svg></div><div class="t fl" style="left:9.4px;top:82.6px;">Log Type</div><div class="dd" style="left:61px;top:84.6px;width:47.7px;height:15px;"><div class="t dt" style="left:3.2px;top:0px;">Log</div><svg class="ic" style="left:36.7px;top:5.5px" width="7" height="5" viewBox="0 0 7 5" ><path d="M.2 .4H6.8L3.5 4.4Z" fill="#d8d8d8"/></svg></div><div class="t fl" style="left:11.8px;top:102.4px;">Message</div><div class="tf" style="left:11.3px;top:119.19999999999999px;width:141px;height:15.4px;"><div class="t dt" style="left:2.5px;top:0px;">HurtVFX Show</div></div><div class="row" style="left:0px;top:144.4px;width:164px;height:18px;"><svg class="ic" style="left:2.8px;top:6.5px" width="9" height="8" viewBox="0 0 9 8" ><path d="M.4 .5H7.8L4.1 7.1Z" fill="rgba(255,255,255,.23)"/></svg><svg class="ic" style="left:20px;top:2.2px" width="11" height="13" viewBox="0 0 11 13" ><path d="M.3 .9H6.7L10 4.2V12.7H.3Z" fill="#f6f6f6"/><path d="M6.7 .9V4.2H10Z" fill="#cdcdcd"/><path d="M4 3.6L3.5 10.8M6.6 3.6L6.1 10.8M1.8 6H8.6M1.5 8.5H8.3" stroke="#1f6b24" stroke-width=".95" fill="none"/></svg><svg class="ic" style="left:37px;top:2px" width="12" height="12" viewBox="0 0 12 12" ><rect x="0" y="0" width="12" height="12" rx="1.5" fill="#2a2a2a"/><path d="M2.3 6.5L4.7 8.8L9.7 3.5" fill="none" stroke="#d2d2d2" stroke-width="1.35"/></svg><div class="t b rt" style="left:54.7px;top:0px;">Debug.Log</div></div><div class="body" style="left:0px;top:162.4px;width:164px;height:83px;"></div><div class="t fl" style="left:9.4px;top:165.4px;">Methods</div><div class="dd" style="left:59.2px;top:167.6px;width:95.4px;height:15px;"><div class="t dt" style="left:3.2px;top:0px;">On Deactivated</div><svg class="ic" style="left:84.4px;top:5.5px" width="7" height="5" viewBox="0 0 7 5" ><path d="M.2 .4H6.8L3.5 4.4Z" fill="#d8d8d8"/></svg></div><div class="t fl" style="left:9.4px;top:184.60000000000002px;">Log Type</div><div class="dd" style="left:61px;top:186.60000000000002px;width:47.7px;height:15px;"><div class="t dt" style="left:3.2px;top:0px;">Log</div><svg class="ic" style="left:36.7px;top:5.5px" width="7" height="5" viewBox="0 0 7 5" ><path d="M.2 .4H6.8L3.5 4.4Z" fill="#d8d8d8"/></svg></div><div class="t fl" style="left:11.8px;top:204.4px;">Message</div><div class="tf" style="left:11.3px;top:221.2px;width:141px;height:15.4px;"><div class="t dt" style="left:2.5px;top:0px;">HurtVFX Hide</div></div></div>
<div class="tab tl" style="left:1190.1px;top:190.10000000000002px;width:17px;height:14.5px;"><svg class="ic" style="left:2.8px;top:0.6px" width="13" height="13" viewBox="0 0 13 13" ><path d="M1.5 1.5H7.2L12 6.5L7.2 11.5H1.5Z" fill="none" stroke="#fff" stroke-width="1"/><path d="M3.3 3.3H6.6L9.7 6.5L6.6 9.7H3.3Z" fill="#fff"/></svg></div>
<div class="tab tr" style="left:1374.5px;top:190.20000000000002px;width:17px;height:14.5px;"><svg class="ic" style="left:1.2px;top:0.8px" width="14" height="13" viewBox="0 0 14 13" ><path d="M1.5 1.5H7.4L11.7 6.5L7.4 11.5H1.5L3.4 6.5Z" fill="none" stroke="#dcdcdc" stroke-width=".95"/></svg></div>
<div class="tab tl" style="left:1190.1px;top:287.3px;width:17px;height:14.5px;"><svg class="ic" style="left:1.9px;top:1.5px" width="14" height="13" viewBox="0 0 14 13" ><path d="M1.3 4.2L3.9 1.4H8.6L12.9 6.5L8.6 11.6H3.9L1.3 8.8Z" fill="none" stroke="#cc14cc" stroke-width=".95"/></svg></div>
<div class="tab tl" style="left:1190.1px;top:389.3px;width:17px;height:14.5px;"><svg class="ic" style="left:1.9px;top:1.5px" width="14" height="13" viewBox="0 0 14 13" ><path d="M1.3 4.2L3.9 1.4H8.6L12.9 6.5L8.6 11.6H3.9L1.3 8.8Z" fill="none" stroke="#cc14cc" stroke-width=".95"/></svg></div>
<div class="node " style="left:903px;top:636px;width:152px;height:94px;"><div class="hdr" style="left:0px;top:0px;width:152px;height:21px;background:#c2813f;"><svg class="ic" style="left:3px;top:4px" width="16" height="14" viewBox="0 0 16 14" ><path d="M1.2 6.6H5.8M13.4 1.6H6.9Q5.8 1.6 5.8 2.7V10.5Q5.8 11.6 6.9 11.6H13.4M5.8 6.6H13.4" fill="none" stroke="#1a0d00" stroke-width="3.4" stroke-linecap="round" opacity=".8" transform="translate(.5 .6)"/><path d="M1.2 6.6H5.8M13.4 1.6H6.9Q5.8 1.6 5.8 2.7V10.5Q5.8 11.6 6.9 11.6H13.4M5.8 6.6H13.4" fill="none" stroke="#fff" stroke-width="2.05" stroke-linecap="butt"/></svg><div class="t ht" style="left:19px;top:0px;">Behavior Tree</div></div><div class="bar" style="left:1px;top:24px;width:148px;height:19px;background:#2f2d62;border:1px solid #3b397f;"><div class="t bl" style="left:6px;top:0px;">Decorators</div><div class="plus" style="left:115px;top:0px;width:32px;height:19px;"><svg class="ic" style="left:4.5px;top:3.5px" width="22" height="12" viewBox="0 0 22 12" ><path d="M6 .7V11.3M.7 6H11.3" stroke="#ececec" stroke-width="1.75"/><path d="M15 4.4H21.4L18.2 8.4Z" fill="#d0d0d0"/></svg></div></div><div class="row" style="left:0px;top:48px;width:152px;height:18px;"><svg class="ic" style="left:2.8px;top:6.5px" width="9" height="8" viewBox="0 0 9 8" ><path d="M.4 .5H7.8L4.1 7.1Z" fill="rgba(255,255,255,.23)"/></svg><svg class="ic" style="left:17.5px;top:2.5px" width="14.0" height="13.0" viewBox="0 0 14 13"><g fill="none" stroke="#101010" stroke-width="3" opacity=".85"><circle cx="7" cy="7.4" r="4.5"/><path d="M2.3 4.4Q1.2 2.2 3.3 1.7Q4.4 1.5 5 2.2M11.7 4.4Q12.8 2.2 10.7 1.7Q9.6 1.5 9 2.2"/></g><circle cx="7" cy="7.4" r="4.5" fill="none" stroke="#fff" stroke-width="1.35"/><path d="M2.3 4.4Q1.2 2.2 3.3 1.7Q4.4 1.5 5 2.2M11.7 4.4Q12.8 2.2 10.7 1.7Q9.6 1.5 9 2.2" fill="none" stroke="#fff" stroke-width="1.25"/><path d="M6.4 5.2H9.2V8.4H6.4Z" fill="#d8d8d8" opacity=".75"/><path d="M6.7 5V8.2H9.4" fill="none" stroke="#fff" stroke-width="1.1"/></svg><svg class="ic" style="left:37px;top:2px" width="12" height="12" viewBox="0 0 12 12" ><rect x="0" y="0" width="12" height="12" rx="1.5" fill="#2a2a2a"/><path d="M2.3 6.5L4.7 8.8L9.7 3.5" fill="none" stroke="#d2d2d2" stroke-width="1.35"/></svg><div class="t b rt" style="left:54.7px;top:0px;">Invoke</div><div class="objf" style="left:98.5px;top:1.7px;width:50.3px;height:14.2px;"><svg class="ic" style="left:1px;top:2px" width="10.9" height="10.1" viewBox="0 0 14 13"><circle cx="7" cy="7.4" r="4.5" fill="#0e0e0e" stroke="#fff" stroke-width="1.7"/><path d="M2.3 4.4Q1.2 2.2 3.3 1.7Q4.4 1.5 5 2.2M11.7 4.4Q12.8 2.2 10.7 1.7Q9.6 1.5 9 2.2" fill="none" stroke="#fff" stroke-width="1.25"/><path d="M6.4 5.2H9.2V8.4H6.4Z" fill="#d8d8d8" opacity=".75"/><path d="M6.7 5V8.2H9.4" fill="none" stroke="#fff" stroke-width="1.1"/></svg><div class="t dt" style="left:14.5px;top:-0.2px;">Idle</div><div class="objb" style="left:35.5px;top:0px;width:15px;height:15px;"><svg class="ic" style="left:5px;top:2.8px" width="6" height="9" viewBox="0 0 6 9" ><path d="M1 1L4.6 4.5L1 8" fill="none" stroke="#8a8a8a" stroke-width="1.2"/></svg></div></div></div><div class="bar" style="left:1px;top:72px;width:148px;height:19px;background:#305230;border:1px solid #386238;"><div class="t bl" style="left:6px;top:0.1px;">Services</div><div class="plus" style="left:115px;top:0px;width:32px;height:19px;"><svg class="ic" style="left:4.5px;top:3.5px" width="22" height="12" viewBox="0 0 22 12" ><path d="M6 .7V11.3M.7 6H11.3" stroke="#ececec" stroke-width="1.75"/><path d="M15 4.4H21.4L18.2 8.4Z" fill="#d0d0d0"/></svg></div></div></div>
<div class="tab tl" style="left:884.1px;top:640.3px;width:17px;height:14.5px;"><svg class="ic" style="left:3.1px;top:0.6px" width="14" height="13" viewBox="0 0 14 13" ><path d="M1.5 1.5H7.4L11.7 6.5L7.4 11.5H1.5L3.4 6.5Z" fill="none" stroke="#dcdcdc" stroke-width=".95"/><path d="M3.7 3H6.9L10 6.5L6.9 10H3.7L5.1 6.5Z" fill="#fff"/></svg></div>
<div class="node" style="left:1308px;top:-30px;width:120px;height:39.7px;"><div class="bar" style="left:1px;top:18px;width:116px;height:18.5px;background:#305230;border:1px solid #386238;"><div class="t bl" style="left:6px;top:0.4px;">Services</div></div></div>
</div>
</div>
</body></html>
